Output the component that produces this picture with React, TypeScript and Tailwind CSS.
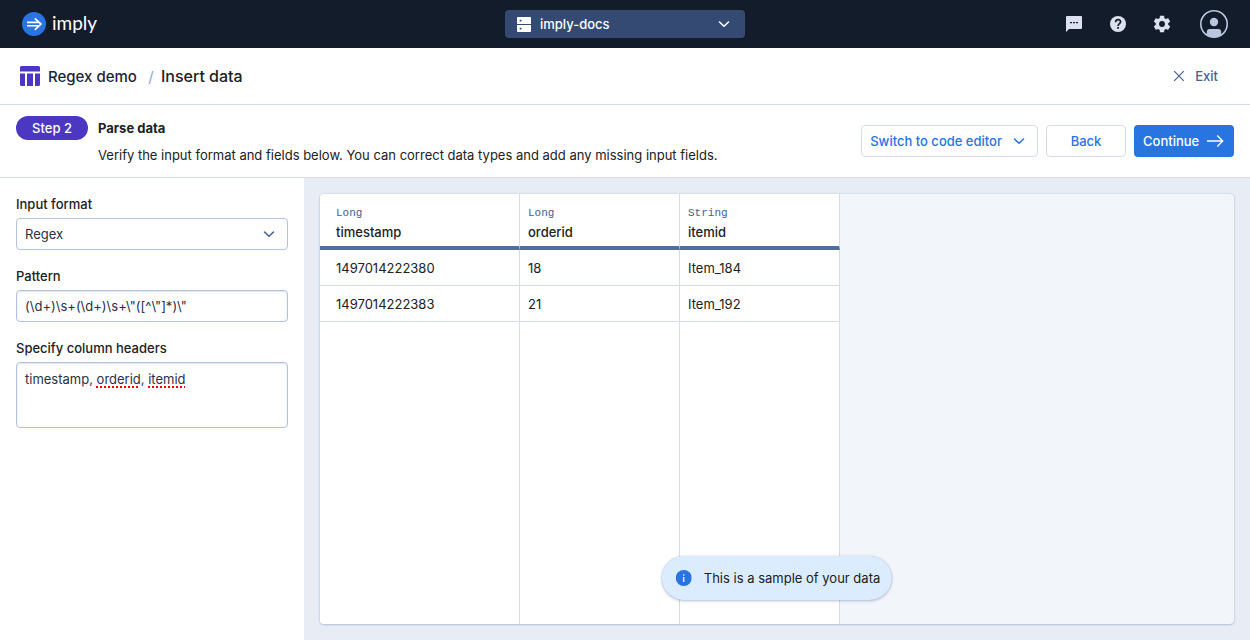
import { useState } from 'react'

const columns = [
  { name: 'timestamp', type: 'Long' },
  { name: 'orderid', type: 'Long' },
  { name: 'itemid', type: 'String' },
]

const rows = [
  ['1497014222380', '18', 'Item_184'],
  ['1497014222383', '21', 'Item_192'],
]

const dictionary = ['timestamp']

function ChevronDown({ className }: { className: string }) {
  return (
    <svg className={className} viewBox="0 0 16 16" fill="none" stroke="currentColor" strokeWidth="1.4" strokeLinecap="round" strokeLinejoin="round" aria-hidden="true">
      <path d="M4 6.200 8 10l4-3.800" />
    </svg>
  )
}

function Logo() {
  return (
    <a href="#home" className="flex items-center gap-1.5 text-white">
      <svg className="size-6" viewBox="0 0 24 24" aria-hidden="true">
        <circle cx="12" cy="12" r="12" fill="#2874e0" />
        <path d="M5 10.400h12.500M5 13.800h12.500M12.800 6.300l6.200 5.800-6.200 5.800" fill="none" stroke="#fff" strokeWidth="1.600" />
      </svg>
      <span className="pb-0.5 font-['Lato',sans-serif] text-[19px] leading-6">imply</span>
    </a>
  )
}

function TopBar() {
  return (
    <header className="grid h-12 grid-cols-[1fr_240px_1fr] items-center bg-[#131c2b] px-[22px]">
      <Logo />
      <button type="button" className="flex h-7 items-center rounded bg-[#344a73] px-3 text-[13px] leading-5 font-medium text-white">
        <svg className="size-4" viewBox="0 0 16 16" aria-hidden="true">
          <path fill="#fff" fillRule="evenodd" d="M.7 0h12.600a.7.7 0 0 1 .7.7V7H0V.7A.7.7 0 0 1 .7 0ZM2.700 2.700v1.700h1.700V2.700ZM0 8h14v6.300a.7.7 0 0 1-.7.7H.7a.7.7 0 0 1-.7-.7ZM2.700 10.700v1.700h1.700V10.700Z" transform="translate(0 1)" />
        </svg>
        <span className="ml-[7px] flex-1 text-left">imply-docs</span>
        <ChevronDown className="size-[18px]" />
      </button>
      <nav className="flex items-center justify-end gap-6 text-[#dbe1ee]">
        <button type="button" aria-label="Messages">
          <svg className="size-5" viewBox="0 0 20 20" aria-hidden="true">
            <path fill="currentColor" d="M3 2h14a1 1 0 0 1 1 1v11a1 1 0 0 1-1 1H5l-3 3V3a1 1 0 0 1 1-1Z" />
            <path stroke="#131c2b" strokeWidth="1.400" d="M6 8.600h2M9 8.600h2M12 8.600h2" />
          </svg>
        </button>
        <button type="button" aria-label="Help">
          <svg className="size-5" viewBox="0 0 20 20" aria-hidden="true">
            <circle cx="10" cy="10" r="8" fill="currentColor" />
            <path fill="none" stroke="#131c2b" strokeWidth="1.700" d="M7.600 8.300c0-3.700 5-3.400 5-.5 0 1.900-2.500 2-2.500 4.200" />
            <path stroke="#131c2b" strokeWidth="1.800" d="M10.100 13v1.800" />
          </svg>
        </button>
        <button type="button" aria-label="Settings">
          <svg className="size-5" viewBox="0 0 24 24" aria-hidden="true">
            <path fill="currentColor" d="M19.430 12.980c.040-.320.070-.640.070-.980s-.030-.660-.070-.980l2.110-1.650c.190-.150.240-.420.120-.640l-2-3.460c-.120-.220-.390-.300-.610-.220l-2.490 1c-.520-.400-1.080-.730-1.690-.980l-.380-2.650A.488.488 0 0 0 14 2h-4c-.250 0-.460.180-.490.420l-.380 2.650c-.610.250-1.170.590-1.690.980l-2.490-1c-.230-.090-.490 0-.610.220l-2 3.460c-.130.220-.070.490.120.640l2.110 1.650c-.040.320-.070.650-.070.980s.030.660.070.980l-2.110 1.650c-.190.150-.240.420-.120.640l2 3.460c.120.220.390.300.610.220l2.490-1c.520.400 1.080.730 1.690.980l.380 2.650c.030.240.240.420.490.420h4c.250 0 .460-.180.490-.420l.380-2.650c.610-.250 1.170-.590 1.690-.980l2.490 1c.230.090.490 0 .610-.220l2-3.460c.120-.220.070-.490-.120-.640l-2.110-1.650ZM12 15.500a3.500 3.500 0 1 1 0-7 3.500 3.500 0 0 1 0 7Z" />
          </svg>
        </button>
        <button type="button" aria-label="Account" className="ml-1 text-[#b9c6de]">
          <svg className="size-7" viewBox="0 0 28 28" aria-hidden="true">
            <circle cx="14" cy="14" r="13.200" fill="none" stroke="currentColor" strokeWidth="1.600" />
            <circle cx="14" cy="12" r="4.200" fill="currentColor" />
            <path fill="currentColor" d="M6.800 25V22a3 3 0 0 1 3-3h8.400a3 3 0 0 1 3 3v3a13.500 13.500 0 0 1-14.400 0Z" />
          </svg>
        </button>
      </nav>
    </header>
  )
}

function Breadcrumbs() {
  return (
    <div className="flex h-[57px] items-center justify-between border-b border-[#d6dcea] px-5">
      <nav aria-label="Breadcrumb" className="flex items-center leading-6 font-medium">
        <svg className="size-5" viewBox="0 0 20 20" fill="#4c37c2" aria-hidden="true">
          <path d="M1.500 0h17A1.500 1.500 0 0 1 20 1.500V5.500H0V1.500A1.500 1.500 0 0 1 1.500 0ZM0 7.500h5V20H1.500A1.500 1.500 0 0 1 0 18.500ZM7 7.500h6V20H7ZM15 7.500h5v11a1.500 1.500 0 0 1-1.500 1.500H15Z" />
        </svg>
        <span className="ml-2 flex items-baseline">
          <a href="#table" className="text-[15px] text-[#1c2438]">Regex demo</a>
          <span className="mr-1 ml-2 w-3 text-center text-[15px] font-normal text-[#8fa5cc]">/</span>
          <span aria-current="page" className="text-base text-[#212121]">Insert data</span>
        </span>
      </nav>
      <button type="button" className="flex items-center gap-2 pr-3 text-[13px] leading-5 font-medium text-[#45618f]">
        <svg className="size-4" viewBox="0 0 16 16" fill="none" stroke="currentColor" strokeWidth="1.200" aria-hidden="true">
          <path d="m3.200 3.200 9.600 9.600M12.800 3.200l-9.600 9.600" />
        </svg>
        Exit
      </button>
    </div>
  )
}

function StepBar() {
  return (
    <section className="flex items-start justify-between border-b border-[#d6dcea] px-4 py-[11px]">
      <div className="flex items-start gap-[10px]">
        <span className="flex h-6 w-[72px] items-center justify-center rounded-full bg-[#4c37c2] text-[13px] leading-6 font-medium text-white">Step 2</span>
        <div className="text-[13px] text-[#212121]">
          <h1 className="leading-6 font-bold">Parse data</h1>
          <p className="mt-1 leading-[22px]">Verify the input format and fields below. You can correct data types and add any missing input fields.</p>
        </div>
      </div>
      <div className="mt-[9px] flex gap-2 text-[13px] leading-5 font-medium">
        <button type="button" className="flex h-8 items-center gap-2 rounded border border-[#d6dcea] pr-[9px] pl-2 text-[#2874e0]">
          Switch to code editor
          <ChevronDown className="size-[18px]" />
        </button>
        <button type="button" className="h-8 w-20 rounded border border-[#d6dcea] text-[#2874e0]">Back</button>
        <button type="button" className="flex h-8 w-[100px] items-center justify-between rounded bg-[#2874e0] pr-[10px] pl-[9px] text-white">
          Continue
          <svg className="h-4 w-[18px]" viewBox="0 0 18 16" fill="none" stroke="currentColor" strokeWidth="1.400" aria-hidden="true">
            <path d="M1 8h15.500M11.300 2.600 16.700 8l-5.400 5.400" />
          </svg>
        </button>
      </div>
    </section>
  )
}

function SpellcheckedArea({ id }: { id: string }) {
  const [value, setValue] = useState('timestamp, orderid, itemid')
  return (
    <div className="grid h-[66px] text-[13px] leading-4">
      <div aria-hidden="true" className="col-start-1 row-start-1 border border-transparent px-2 py-2 whitespace-pre-wrap text-transparent">
        {value.split(/(\w+)/).map((part, i) =>
          /^\w+$/.test(part) && !dictionary.includes(part) ? (
            <span key={i} className="underline decoration-[#e8000d] decoration-dotted decoration-2 underline-offset-2 [text-decoration-skip-ink:none]">{part}</span>
          ) : (
            part
          ),
        )}
      </div>
      <textarea
        id={id}
        spellCheck={false}
        value={value}
        onChange={(e) => setValue(e.target.value)}
        className="col-start-1 row-start-1 resize-none rounded border border-[#b4c1dc] bg-transparent p-2 text-[#2a3045] shadow-[inset_0_1px_2px_rgba(80,100,150,0.2)] outline-none"
      />
    </div>
  )
}

function FormatPanel() {
  return (
    <form className="w-[304px] shrink-0 space-y-4 bg-white px-4 pt-4 text-[13px]">
      <div>
        <label htmlFor="format" className="mb-1 block leading-5 font-medium text-[#212121]">Input format</label>
        <div className="relative">
          <select id="format" className="block h-8 w-full appearance-none rounded border border-[#b4c1dc] bg-white px-2 leading-5 text-[#2a3045]">
            <option>Regex</option>
          </select>
          <ChevronDown className="pointer-events-none absolute top-[7px] right-[10px] size-[18px] text-[#45618f]" />
        </div>
      </div>
      <div>
        <label htmlFor="pattern" className="mb-1 block leading-5 font-medium text-[#212121]">Pattern</label>
        <input
          id="pattern"
          type="text"
          defaultValue={'(\\d+)\\s+(\\d+)\\s+\\"([^\\"]*)\\"'}
          className="block h-8 w-full rounded border border-[#b4c1dc] px-2 leading-5 text-[#2a3045] shadow-[inset_0_1px_2px_rgba(80,100,150,0.2)] outline-none"
        />
      </div>
      <div>
        <label htmlFor="headers" className="mb-1 block leading-5 font-medium text-[#212121]">Specify column headers</label>
        <SpellcheckedArea id="headers" />
      </div>
    </form>
  )
}

function SampleTable() {
  return (
    <div className="relative flex flex-1 overflow-hidden rounded bg-[#f2f5fa] shadow-[0_0_2px_rgba(60,80,130,0.3),0_1px_2px_rgba(60,80,130,0.2)]">
      <table className="w-[520px] table-fixed border-separate border-spacing-0 bg-white text-left text-[13px] text-[#212121]">
        <colgroup>
          <col className="w-[200px]" />
          <col className="w-[160px]" />
          <col className="w-[160px]" />
        </colgroup>
        <thead>
          <tr className="h-14">
            {columns.map((c) => (
              <th key={c.name} scope="col" className="h-14 border-r border-b-4 border-r-[#d6dcea] border-b-[#526e9d] px-2 pt-[9px] pb-1 align-top font-medium first:pl-4">
                <span className="block font-['Liberation_Mono',monospace] text-[11px] leading-5 font-normal text-[#45618f]">{c.type}</span>
                <span className="block leading-[18px]">{c.name}</span>
              </th>
            ))}
          </tr>
        </thead>
        <tbody>
          {rows.map((row) => (
            <tr key={row[0]} className="h-9">
              {row.map((cell) => (
                <td key={cell} className="h-9 border-r border-b border-[#d6dcea] px-2 leading-5 first:pl-4">{cell}</td>
              ))}
            </tr>
          ))}
          <tr>
            {columns.map((c) => (
              <td key={c.name} className="border-r border-[#d6dcea]" />
            ))}
          </tr>
        </tbody>
      </table>
      <div role="status" className="absolute bottom-6 left-1/2 flex h-11 -translate-x-1/2 items-center gap-3 rounded-full bg-[#daecfd] pr-3 pl-[14px] text-[13px] leading-5 whitespace-nowrap text-[#212121] shadow-[0_0_1px_rgba(60,80,130,0.3),0_1px_3px_rgba(60,80,130,0.35)]">
        <svg className="size-4" viewBox="0 0 16 16" aria-hidden="true">
          <circle cx="8" cy="8" r="8" fill="#2874e0" />
          <path fill="#daecfd" d="M7.200 4.200h1.500v1.600H7.200ZM7.200 7h1.500v5H7.200Z" />
        </svg>
        This is a sample of your data
      </div>
    </div>
  )
}

export default function App() {
  return (
    <div className="flex min-h-screen flex-col bg-white font-['Inter',sans-serif]">
      <TopBar />
      <Breadcrumbs />
      <StepBar />
      <main className="flex flex-1 bg-[#e8edf5]">
        <FormatPanel />
        <div className="flex flex-1 p-4">
          <SampleTable />
        </div>
      </main>
    </div>
  )
}
